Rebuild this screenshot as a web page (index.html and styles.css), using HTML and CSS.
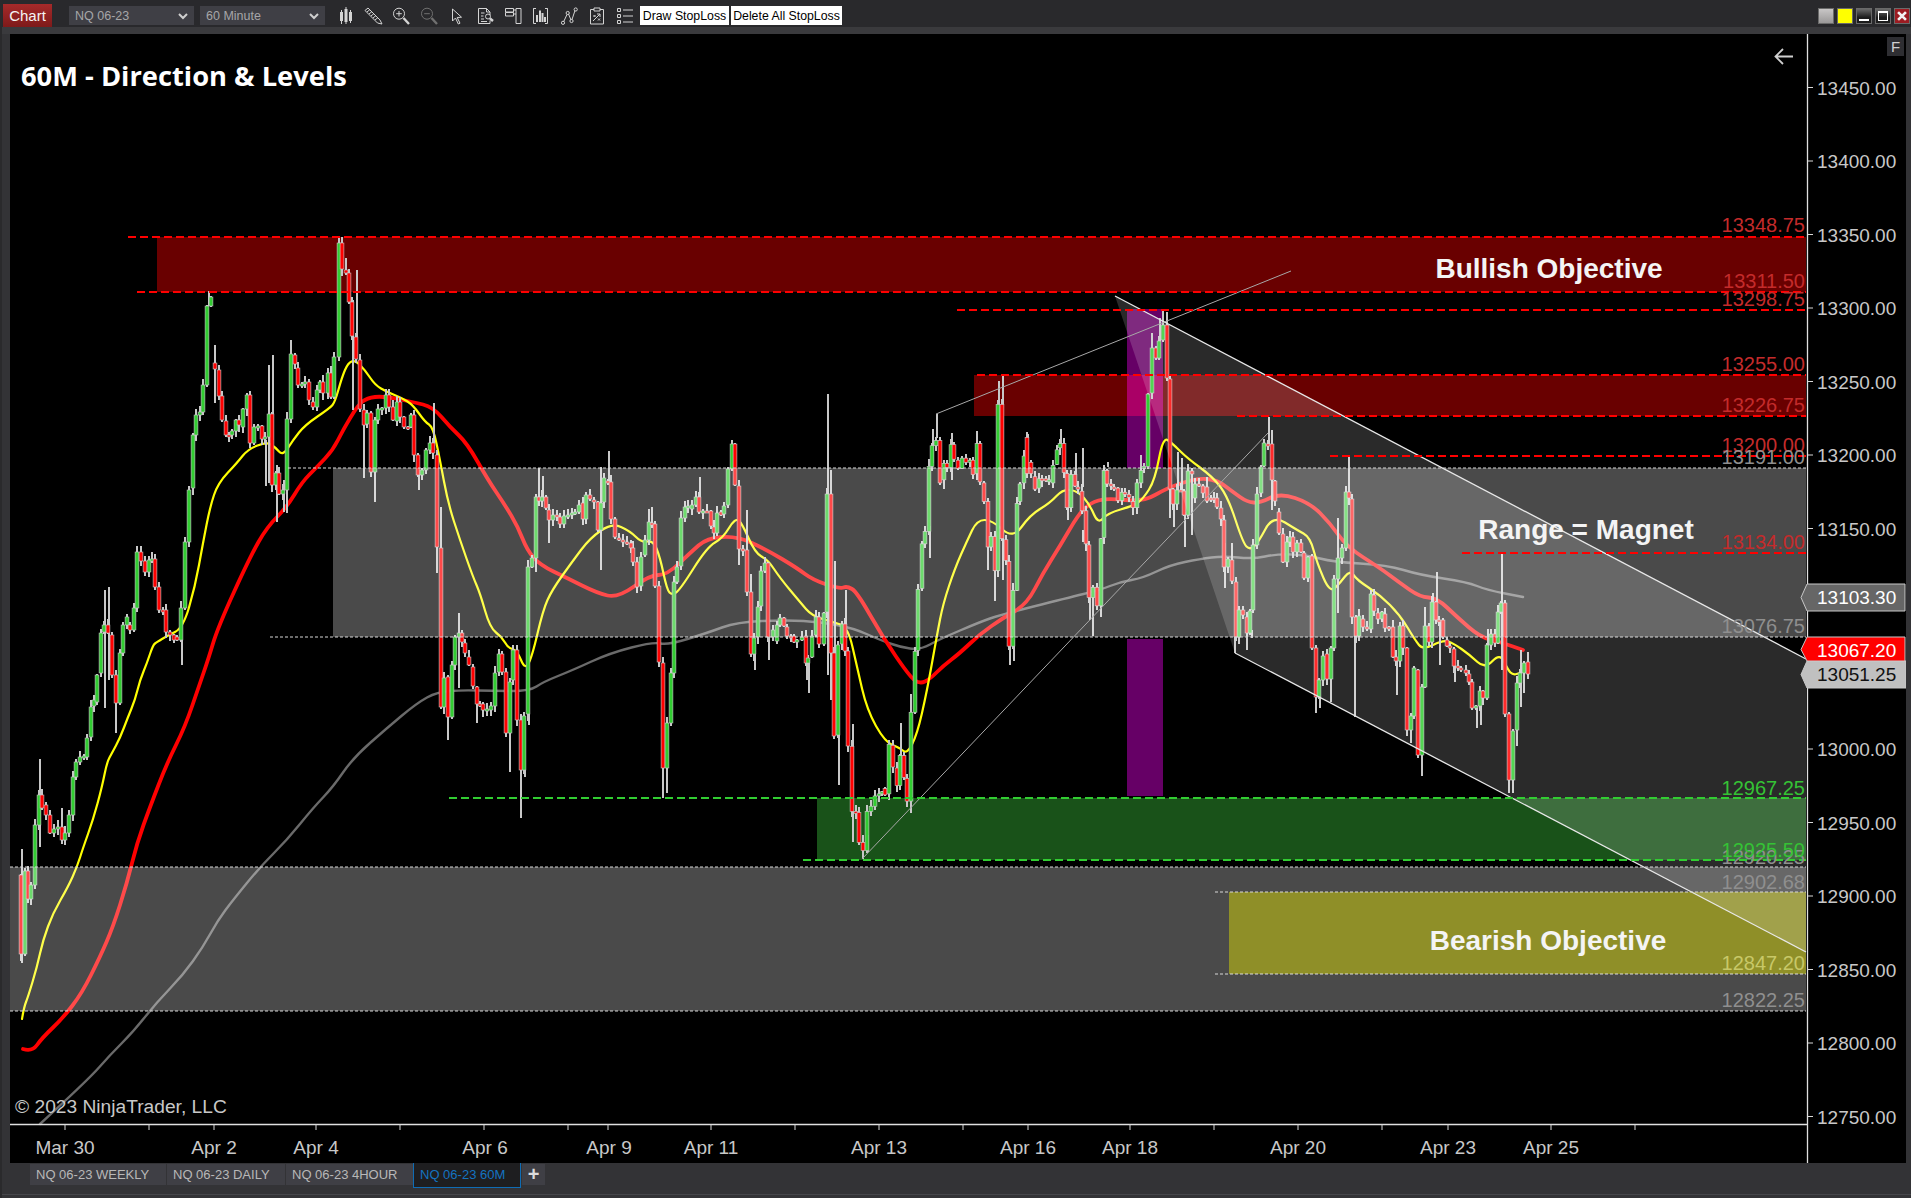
FILE: index.html
```html
<!DOCTYPE html>
<html lang="en">
<head>
<meta charset="utf-8">
<title>Chart</title>
<link rel="stylesheet" href="styles.css">
</head>
<body>
<div class="window">
  <header class="toolbar">
    <div class="chart-tab">Chart</div>
    <div class="combo combo-inst"><span>NQ 06-23</span><svg class="chev" viewBox="0 0 10 7"><path d="M1 1l4 4 4-4"/></svg></div>
    <div class="combo combo-period"><span>60 Minute</span><svg class="chev" viewBox="0 0 10 7"><path d="M1 1l4 4 4-4"/></svg></div>
    <div class="tools">
      <svg class="tool" viewBox="0 0 28 22"><path d="M10.500 6v14M15 3v17M19.500 6v13"/><rect class="solid" x="9" y="8" width="3" height="9"/><rect class="solid" x="13.500" y="5" width="3" height="13"/><rect class="solid" x="18" y="8" width="3" height="9"/></svg>
      <svg class="tool" viewBox="0 0 28 22"><path d="M6 6.500L9 4l12 12 2 4-4.500-1zM8 8l3-2.500M10 10l3-2.500M12 12l3-2.500M14 14l3-2.500M16 16l3-2.500"/></svg>
      <svg class="tool" viewBox="0 0 28 22"><circle cx="12" cy="9.700" r="5.500"/><path d="M12 7v5.500M9.200 9.700h5.600"/><path class="thick" d="M16.500 14l5.500 6"/></svg>
      <svg class="tool dim" viewBox="0 0 28 22"><circle cx="12" cy="9.700" r="5.500"/><path d="M9.200 9.700h5.600"/><path class="thick" d="M16.500 14l5.500 6"/></svg>
      <svg class="tool" viewBox="0 0 28 22"><path d="M9.500 5v12l3-3 2.800 6 1.700-.8-2.800-5.700 4.300-.3z"/></svg>
      <svg class="tool" viewBox="0 0 28 22"><path d="M7.500 4.500h8l3.500 3.500v3M15.500 4.500V8H19M19 16.500v3H7.500v-15M10 9h3.500M10 12h2.500M10 15h3M10 17.500h6"/><circle cx="17" cy="12.500" r="2.500"/><path class="thick" d="M19 14.500l3 2.500"/></svg>
      <svg class="tool" viewBox="0 0 28 22"><path d="M6.500 4.500h8v3.500h-8zM6.500 8.500h8v3.500h-8zM17 4.500h5v15h-5zM14.500 6h2.500M14.500 10h2.500"/></svg>
      <svg class="tool" viewBox="0 0 28 22"><path d="M9 4.500H6.500v15H9M18 4.500h2.500v15H18M6.500 4.500v2M20.500 4.500v2"/><path class="mid" d="M10 18v-7M13 18V6.500M15.500 18V9M18 18v-5"/></svg>
      <svg class="tool" viewBox="0 0 28 22"><path d="M8.500 18l3.500-7.500M13.500 10l2.500 6M17 15.500l3-9"/><circle cx="8" cy="18.800" r="1.600"/><circle cx="12.700" cy="9" r="1.600"/><circle cx="16.500" cy="17" r="1.600"/><circle cx="20.700" cy="5.500" r="1.600"/></svg>
      <svg class="tool" viewBox="0 0 28 22"><path d="M7.500 5.500H11M17 5.500h3.500v14.500h-13V5.500M11 4h6v3h-6zM10 17l7-7M14 10h3v3M10.500 11l2 2M12.500 11l-2 2M15 14.500l2 2M17 14.500l-2 2"/></svg>
      <svg class="tool" viewBox="0 0 28 22"><path d="M6.500 4.500h3v3h-3zM6.500 10.500h3v3h-3zM6.500 16.500h3v3h-3zM12 6h10M12 12h10M12 18h10"/></svg>
    </div>
    <button class="action">Draw StopLoss</button>
    <button class="action">Delete All StopLoss</button>
    <div class="win-buttons">
      <span class="wbtn wbtn-grey"></span>
      <span class="wbtn wbtn-yellow"></span>
      <span class="wbtn wbtn-dark"><i class="min-glyph"></i></span>
      <span class="wbtn wbtn-dark"><i class="max-glyph"></i></span>
      <span class="wbtn wbtn-close"><svg viewBox="0 0 16 16"><path d="M3.500 3.500l9 9M12.500 3.500l-9 9"/></svg></span>
    </div>
  </header>

  <main class="chart-frame">
    <svg id="chart" class="chart" viewBox="10 34 1896 1129" width="1896" height="1129">
      <g id="zones-under">
        <rect class="purple" x="1127" y="309" width="36" height="159"/>
        <rect class="purple" x="1127" y="639" width="36" height="157"/>
        <rect class="zone-red" x="157" y="237" width="1649" height="55"/>
        <rect class="zone-red" x="974" y="375" width="832" height="41"/>
        <rect class="purple-hot" x="1127" y="375" width="36" height="41"/>
        <rect class="zone-green" x="817" y="798" width="989" height="62"/>
      </g>
      <g id="series"></g>
      <g id="zones-over">
        <rect class="zone-grey" x="333" y="468" width="1473" height="169"/>
        <rect class="zone-grey" x="10" y="867" width="1796" height="144"/>
        <rect class="zone-yellow" x="1229" y="892" width="577" height="82"/>
        <polygon class="channel" points="1115,296 1806,659 1806,952 1235,653"/>
      </g>
      <g class="trend">
        <path d="M936 414L1291 271"/>
        <path d="M862 859L1268 433"/>
      </g>
      <g class="channel-lines">
        <path d="M1115 296L1806 659"/>
        <path d="M1235 653L1806 952"/>
      </g>
      <g class="dash dash-red">
        <path d="M128 237H1806M137 292H1806M957 310H1806M977 375H1806M1237 416H1806M1330 456H1806M1462 553H1806"/>
      </g>
      <g class="dash dash-green">
        <path d="M449 798H1806M803 860H1806"/>
      </g>
      <g class="dash dash-white">
        <path d="M288 468H1806M270 637H1806M10 867H1806M1215 892H1806M1215 974H1806M10 1011H1806"/>
      </g>
      <g class="level level-red">
        <text x="1805" y="232">13348.75</text>
        <text x="1805" y="288">13311.50</text>
        <text x="1805" y="306">13298.75</text>
        <text x="1805" y="371">13255.00</text>
        <text x="1805" y="412">13226.75</text>
        <text x="1805" y="452">13200.00</text>
        <text x="1805" y="549">13134.00</text>
      </g>
      <g class="level level-grey">
        <text x="1805" y="464">13191.00</text>
        <text x="1805" y="633">13076.75</text>
        <text x="1805" y="864">12920.25</text>
        <text x="1805" y="889">12902.68</text>
        <text x="1805" y="1007">12822.25</text>
      </g>
      <g class="level level-green">
        <text x="1805" y="795">12967.25</text>
        <text x="1805" y="857">12925.50</text>
      </g>
      <g class="level level-yellow">
        <text x="1805" y="970">12847.20</text>
      </g>
      <text class="big" x="1549" y="278">Bullish Objective</text>
      <text class="big" x="1586" y="539">Range = Magnet</text>
      <text class="big" x="1548" y="950">Bearish Objective</text>
      <text class="title" x="21" y="86">60M - Direction &amp; Levels</text>
      <text class="copy" x="15" y="1113">© 2023 NinjaTrader, LLC</text>
      <path class="back" d="M1793 56.500h-17M1783 49l-7.500 7.500 7.500 7.500"/>

      <path class="axis" d="M1807.500 34V1163M10 1124.500H1807"/>
      <g id="price-axis" class="price-axis"></g>
      <g id="time-axis" class="time-axis"></g>

      <g class="tag tag-grey">
        <polygon points="1801,597.500 1807,584 1905,584 1905,611 1807,611"/>
        <text x="1817" y="604">13103.30</text>
      </g>
      <g class="tag tag-light">
        <polygon points="1801,674.500 1807,661 1906,661 1906,688 1807,688"/>
        <text x="1817" y="681">13051.25</text>
      </g>
      <g class="tag tag-red">
        <polygon points="1801,649.500 1807,637 1905,637 1905,661 1807,661"/>
        <text x="1817" y="657">13067.20</text>
      </g>
    </svg>
    <div class="f-box">F</div>
  </main>

  <nav class="tabs">
    <div class="tab tab-weekly">NQ 06-23 WEEKLY</div>
    <div class="tab tab-daily">NQ 06-23 DAILY</div>
    <div class="tab tab-four">NQ 06-23 4HOUR</div>
    <div class="tab tab-active">NQ 06-23 60M</div>
    <div class="tab tab-add">+</div>
  </nav>
</div>
<script src="app.js"></script>
</body>
</html>
```
FILE: styles.css
```css
* { box-sizing: border-box; }
html, body { margin: 0; padding: 0; background: #333336; overflow: hidden; }
body { font-family: "Liberation Sans", Arial, sans-serif; }
.window { width: 1911px; height: 1198px; display: flex; flex-direction: column; background: #333336; border-left: 2px solid #2a2a2c; position: relative; }
.window::after { content: ""; position: absolute; left: 0; right: 0; bottom: 3px; height: 1px; background: #46464a; }

.toolbar { height: 34px; flex: none; display: flex; align-items: flex-start; padding: 4px 1px 0 1px; background: linear-gradient(#29292c 0 27px, #3a3a3d 27px); border-top: 0; }
.chart-tab { width: 49px; height: 23px; background: linear-gradient(#a52a2a, #7e1a1a); color: #f4f4f4; font-size: 15px; line-height: 24px; text-align: center; }
.combo { height: 19px; margin-top: 2px; background: #3f3f45; color: #a6a6a8; font-size: 12.500px; display: flex; align-items: center; justify-content: space-between; padding: 1px 6px 0; }
.combo-inst { width: 125px; margin-left: 17px; }
.combo-period { width: 125px; margin-left: 6px; }
.chev { width: 10px; height: 7px; fill: none; stroke: #cfcfcf; stroke-width: 2; }
.tools { display: flex; margin-left: 6px; margin-top: 0; }
.tool { width: 28px; height: 22px; fill: none; stroke: #d4d4d4; stroke-width: 1; }
.tool .solid { fill: #d4d4d4; stroke: none; }
.tool .thick { stroke-width: 2.400; }
.tool .mid { stroke-width: 2; }
.tool.dim { stroke: #707070; }
.action { height: 19px; margin: 2px 2px 0 0; padding: 1px 0 0; border: 0; background: #fff; color: #000; font: 12.300px/18px "Liberation Sans", Arial, sans-serif; }
.action:nth-of-type(1) { width: 89px; margin-left: 1px; }
.action:nth-of-type(2) { width: 111px; }
.win-buttons { margin-left: auto; margin-top: 4px; display: flex; gap: 3px; }
.wbtn { width: 16px; height: 16px; display: flex; align-items: center; justify-content: center; border: 1px solid #6a6a6a; }
.wbtn-grey { background: linear-gradient(#c8c6c6, #9a9898); }
.wbtn-yellow { background: #ffff00; }
.wbtn-dark { background: linear-gradient(#6a6a6a, #1c1c1c 60%); }
.wbtn-close { background: #9c1c22; }
.wbtn-close svg { width: 14px; height: 14px; fill: none; stroke: #f2f2f2; stroke-width: 3; }
.min-glyph { width: 10px; height: 2px; background: #fff; margin-top: 7px; }
.max-glyph { width: 10px; height: 10px; border: 1px solid #fff; border-top-width: 2px; }

.chart-frame { position: relative; height: 1129px; flex: none; margin-left: 8px; width: 1896px; background: #000; }
.chart { display: block; background: #000; font-family: "Liberation Sans", Arial, sans-serif; }
.f-box { position: absolute; left: 1877px; top: 3px; width: 17px; height: 19px; background: #2e2e32; color: #d0d0d0; font-size: 15px; line-height: 19px; text-align: center; }

.purple { fill: #660066; }
.purple-hot { fill: #aa0066; }
.zone-red { fill: rgba(255, 0, 0, 0.41); }
.zone-green { fill: #195219; }
.zone-yellow { fill: #8f8f28; }
.zone-grey { fill: rgba(255, 255, 255, 0.29); }
.channel { fill: rgba(255, 255, 255, 0.165); }
.trend path { stroke: #a8a8a8; stroke-width: 1; fill: none; }
.channel-lines path { stroke: #e8e8e8; stroke-width: 1.300; fill: none; }
.dash path { fill: none; }
.dash-red path { stroke: #ff0000; stroke-width: 2; stroke-dasharray: 8 4; }
.dash-green path { stroke: #32cd32; stroke-width: 2; stroke-dasharray: 8 4; }
.dash-white path { stroke: #d8d8d8; stroke-width: 1; stroke-dasharray: 3 2; }

.level text { font-size: 20px; text-anchor: end; }
.level-red text { fill: #c42b2b; }
.level-grey text { fill: #8f8f8f; }
.level-green text { fill: #35c235; }
.level-yellow text { fill: #c8c868; }
.big { font-size: 28px; font-weight: 700; fill: #f4f4f4; text-anchor: middle; }
.title { font-family: "Open Sans", sans-serif; font-size: 27.300px; font-weight: 700; fill: #fff; }
.copy { font-size: 19.200px; fill: #c8c8c8; }
.back { fill: none; stroke: #cfcfcf; stroke-width: 1.800; }

.axis { stroke: #e0e0e0; stroke-width: 1.300; fill: none; }
.price-axis text { font-size: 19px; fill: #c8c8c8; }
.price-axis path, .time-axis path { stroke: #d8d8d8; stroke-width: 1; fill: none; }
.time-axis text { font-size: 19px; fill: #c8c8c8; text-anchor: middle; }
.tag polygon { stroke: #c8c8c8; stroke-width: 1; }
.tag text { font-size: 19px; }
.tag-grey polygon { fill: #666; }
.tag-grey text { fill: #fff; }
.tag-red polygon { fill: #ff0000; }
.tag-red text { fill: #fff; }
.tag-light polygon { fill: #c0c0c0; }
.tag-light text { fill: #111; }

.ma { fill: none; stroke-linejoin: round; stroke-linecap: round; }
.ma-grey { stroke: #6a6a6a; stroke-width: 2.400; }
.ma-yellow { stroke: #ffff00; stroke-width: 2.200; }
.ma-red { stroke: #ff0000; stroke-width: 3.800; }
.wick { stroke: #c8c8c8; stroke-width: 2; shape-rendering: crispEdges; }
.body { stroke: #c8c8c8; stroke-width: 0.600; }
.body-up { fill: #32cd32; }
.body-down { fill: #ff0000; }

.tabs { flex: 1; display: flex; align-items: flex-start; padding-left: 28px; background: #333336; }
.tab { height: 21px; margin-top: 1px; margin-right: 1px; background: #3f3f45; color: #b8b8b8; font-size: 13px; line-height: 21px; padding-left: 6px; white-space: nowrap; }
.tab-weekly { width: 136px; }
.tab-daily { width: 118px; }
.tab-four { width: 127px; margin-right: 0; }
.tab-active { width: 108px; height: 25px; margin-top: 0; background: #1e1e20; color: #1473c0; line-height: 23px; border: 1px solid #0f6cb4; border-top: 0; }
.tab-add { width: 23px; color: #dcdcdc; font-size: 20px; font-weight: 700; padding: 0; text-align: center; }
```
FILE: app.js
```js
// Price series traced from the chart: x, open y, close y (in screen pixels).
var segA = [21,875,954,25,954,871,28,871,899,31,899,885,35,885,825,39,825,795,42,795,808,46,805,815,50,815,833,54,833,829,58,829,827,62,827,840,65,840,833,69,833,815,73,815,777,76,777,762,80,762,757,84,757,756,87,757,738,91,737,707,94,706,700,97,702,675,101,673,633,104,632,625,108,625,633,112,635,675,116,675,703,120,703,653,123,653,625,127,625,617,130,625,630,134,630,608,137,608,552,141,552,561,145,561,572,149,572,560,152,560,559,155,559,587,159,587,610,163,610,612,166,610,632,170,632,635,174,635,640,177,637,640,181,640,608,185,608,542,189,542,490,193,488,435,196,435,415,200,415,412,203,412,385,207,385,306,211,306,297,215,363,369,219,370,396,222,396,420,226,421,435,229,435,436,232,435,431,236,431,420,239,420,425,243,427,409,247,409,395,250,395,443,254,443,427,258,427,426,262,426,439,265,439,437,269,437,414,272,414,485,276,485,473,279,473,494,283,494,490,287,490,419,291,419,354,295,355,364,298,368,385,302,385,384,305,384,382,309,382,400,313,402,407,317,407,390,320,390,382,323,382,393,328,393,373,331,373,397,334,397,357,339,357,243,342,243,269,346,270,273,349,273,302,352,302,336,356,337,359,360,360,409,364,410,425,367,424,413,371,413,472,375,472,420,378,420,409,382,409,408,386,408,395,389,395,407,393,407,420,397,421,402,400,402,417,404,417,427,408,427,428,411,427,415,414,415,455,418,455,475,422,475,470,426,470,450,430,450,443,433,443,453,437,455,547,441,548,707,444,707,678,448,677,717,452,717,665,455,665,637,459,637,633,462,633,642,465,643,653,469,657,665,473,667,686,477,687,704,480,704,705,483,704,710,487,710,709,491,710,706,495,706,673,499,672,654,502,654,672,506,672,733,510,733,682,513,680,650,517,650,720,521,720,770,524,770,716,528,714,567,532,567,558,536,558,497,539,497,501,542,501,497,546,497,508,549,510,520,553,520,515,557,515,516,560,517,524,564,524,516,568,516,515,572,515,513,575,513,512,579,512,505,583,503,519,586,519,495,590,495,499,594,500,502,598,502,530,601,530,503,604,502,478,608,481,483,611,482,519,615,519,537,619,538,540,623,540,542,627,542,543,631,543,548,633,548,562,637,562,587,641,586,557,645,555,540,649,540,522,652,523,524,655,524,586,659,586,662,663,663,768,667,768,723,671,723,673,674,673,582,677,582,567,681,566,518,685,518,507,688,507,506,692,509,505,696,505,497,699,497,512,703,512,511,707,511,512,711,511,526,714,527,533,717,533,513,721,512,515,724,514,506,728,505,469,732,469,444,735,444,485,739,486,549,743,549,550,747,550,592,751,592,654,754,654,638,758,637,607,761,606,571,765,571,563,768,563,637,773,637,630,777,641,625,780,625,618,784,618,626,787,627,636,791,636,637,794,636,642,797,642,640,802,640,637,806,636,663,808,663,658,812,657,636,816,635,617,819,617,644,824,644,613,827,612,494,831,494,653,834,653,736,838,735,645,842,644,624,845,624,651,848,651,746];
var segB = [852,734,797,856,797,798,859,798,827,863,827,835,867,835,797,871,797,792,875,792,782,879,782,780,882,780,778,885,775,781,889,780,732,893,733,754,897,755,772,900,772,743,904,743,764,907,765,787,911,787,701,915,701,642,918,641,582,922,581,538,925,538,526,929,526,463,932,463,443,936,443,438,940,438,479,944,476,460,947,460,464,951,464,442,954,442,456,958,457,465,962,465,455,966,455,459,970,459,457,973,457,471,977,470,441,980,441,478,984,479,497,988,497,541,991,541,531,995,531,564,998,564,403,1002,403,533,1006,534,554,1009,555,637,1013,637,583,1017,583,499,1020,497,480,1024,479,453,1027,435,470,1031,459,470,1035,473,485,1039,484,475,1042,475,476,1046,475,477,1049,477,476,1053,479,462,1057,461,447,1060,445,441,1064,441,469,1067,470,503,1071,503,471,1075,471,482,1078,483,485,1082,487,506,1086,506,538,1089,539,590,1093,590,580,1097,580,598,1101,598,533,1104,532,467,1107,467,480,1111,480,482,1114,483,484,1118,484,496,1122,496,488,1125,488,489,1129,490,493,1133,497,503,1137,503,479,1141,479,467,1144,465,463,1148,463,393];
var segC = [1152,393,348,1156,348,358,1159,358,341,1163,340,325,1167,325,378,1170,379,489,1173,489,504,1177,504,490,1181,490,491,1184,491,515,1188,515,471,1192,471,474,1195,498,484,1199,484,486,1203,486,493,1207,487,501,1211,498,499,1214,498,498,1217,498,507,1221,508,519,1224,520,567,1228,567,559,1232,560,581,1236,582,637,1239,637,610,1243,610,615,1247,617,633,1250,633,611,1253,610,545,1257,545,494,1261,493,467,1264,466,443,1268,444,444,1272,444,480,1275,481,501,1279,512,533,1283,534,562,1287,562,542,1290,542,537,1293,537,552,1297,552,543,1301,543,552,1304,553,578,1308,578,557,1312,556,648,1316,648,697,1319,697,680,1323,680,656,1327,654,679,1331,679,648,1334,648,579,1338,579,558,1342,558,548,1346,548,492,1349,492,498,1352,499,617,1356,617,636,1359,636,616,1363,619,627,1367,627,629,1371,629,594,1374,595,611,1378,613,619,1382,619,612,1385,614,628,1389,627,627,1393,627,657,1396,657,661,1400,661,626,1403,626,648,1407,648,730,1411,730,716,1414,716,668,1418,670,755,1422,755,687,1425,687,626,1429,626,642,1432,642,602,1436,602,620,1439,620,621,1443,620,637,1447,640,646,1450,646,648,1454,649,666,1458,666,667,1461,668,668,1466,670,673,1469,674,682,1472,682,708,1476,708,706,1480,706,691,1483,691,698,1487,698,645,1491,645,634,1495,634,643,1498,643,612,1501,612,603,1505,603,714,1509,714,780,1513,780,731,1517,730,683,1520,683,673,1524,673,663,1528,662,674];
// Long wicks: x, top, bottom.
var wicks = [22,849,963,40,759,847,62,808,843,105,590,708,109,587,680,116,700,733,182,640,665,209,291,306,215,345,403,269,365,483,273,355,440,266,440,486,277,465,522,284,480,512,287,490,513,291,340,354,339,237,243,346,258,270,353,300,410,357,270,340,364,420,478,375,470,502,419,470,490,434,403,450,441,507,707,437,450,573,448,677,740,459,613,688,477,700,723,510,730,772,521,720,818,525,770,777,529,714,725,539,468,497,543,476,500,536,555,572,549,515,543,601,467,570,609,451,482,649,509,522,652,507,524,663,660,798,667,768,793,700,477,497,739,480,565,747,510,550,751,574,592,755,650,670,769,630,660,807,660,680,809,660,693,828,394,675,831,470,700,835,561,653,839,735,785,846,590,624,853,724,842,863,835,859,868,835,852,901,723,772,911,694,813,930,526,558,937,414,438,933,429,463,944,460,489,952,433,480,977,431,470,988,520,570,995,560,601,999,381,420,1003,375,580,1010,640,665,1014,640,661,1028,434,470,1061,429,447,1068,500,520,1076,453,482,1083,448,487,1083,530,542,1093,590,636,1090,590,620,1101,600,617,1108,462,467,1133,500,513,1141,455,467,1152,333,348,1160,318,341,1163,310,325,1167,312,325,1170,489,518,1174,500,527,1178,452,504,1182,458,491,1185,512,547,1192,474,535,1207,477,487,1225,543,588,1232,543,581,1235,637,653,1247,633,650,1252,630,638,1269,417,444,1272,430,510,1316,697,713,1320,697,708,1331,679,702,1338,518,613,1349,457,492,1355,617,717,1397,661,695,1411,730,743,1422,755,776,1425,607,687,1437,572,602,1433,593,642,1440,620,665,1455,649,682,1477,708,728,1481,706,725,1488,629,698,1502,554,670,1509,780,793,1513,780,793,1517,730,746,1521,650,707,1524,673,693,1528,652,662];
var yellow = [22,1019,24,1007,28,997,37,967,43,940,53,913,68,887,77,867,83,848,93,820,102,787,107,762,112,753,120,738,128,717,135,700,140,680,147,663,153,645,157,642,167,636,183,628,195,587,203,543,210,507,218,483,237,463,248,449,267,442,275,447,283,456,293,440,305,425,330,408,335,402,342,377,348,363,355,360,365,370,375,385,387,392,402,398,413,405,425,422,433,427,440,460,448,503,460,540,473,577,480,593,490,628,502,637,508,648,517,650,525,670,532,657,543,610,552,590,572,562,590,538,612,523,630,531,642,543,653,540,660,557,667,590,672,595,680,590,707,547,723,538,735,518,742,523,755,553,768,560,780,578,800,602,812,616,833,622,848,627,857,667,867,710,885,742,900,748,907,754,917,735,927,691,937,635,943,604,955,568,967,541,977,520,992,520,1013,539,1030,515,1050,503,1063,489,1078,491,1090,505,1098,524,1108,513,1133,506,1143,499,1155,480,1163,437,1172,443,1187,458,1213,477,1228,497,1243,543,1250,550,1258,543,1273,515,1297,530,1310,537,1317,563,1330,593,1340,583,1350,570,1357,580,1380,595,1400,615,1415,640,1423,650,1443,640,1453,643,1470,655,1485,669,1500,653,1508,670,1513,675,1520,673];
var red = [23,1049,32,1052,42,1038,63,1018,82,993,100,957,113,927,127,883,137,843,150,807,167,763,185,727,200,683,208,660,218,627,250,557,267,527,287,507,302,482,317,467,333,450,343,430,358,405,367,398,383,396,413,402,433,407,450,427,467,443,488,480,505,505,518,527,527,550,540,565,567,578,597,593,618,598,650,575,667,575,690,553,707,538,737,536,767,550,797,568,813,580,840,589,847,586,857,592,882,636,910,677,920,684,930,679,943,666,960,653,980,634,1003,618,1027,604,1043,573,1060,546,1078,515,1090,503,1107,498,1143,502,1167,488,1197,478,1217,480,1233,492,1247,502,1260,503,1280,493,1310,503,1330,523,1347,547,1380,568,1400,583,1420,597,1437,598,1457,617,1480,637,1500,642,1523,650];
var grey = [40,1124,88,1080,110,1055,133,1032,157,1002,183,975,203,947,218,920,233,900,260,867,287,840,313,808,333,787,353,758,387,728,417,703,437,692,463,690,493,691,530,691,543,682,573,670,610,653,653,642,668,645,707,633,737,622,787,620,820,622,853,628,880,640,900,647,920,650,940,639,980,622,1000,615,1067,598,1100,590,1120,582,1143,578,1170,565,1200,559,1223,556,1253,559,1277,554,1307,555,1333,562,1387,565,1420,575,1467,582,1487,590,1523,597];

var NS = "http://www.w3.org/2000/svg";
function el(parent, tag, attrs, text) {
  var n = document.createElementNS(NS, tag);
  for (var k in attrs) n.setAttribute(k, attrs[k]);
  if (text) n.textContent = text;
  parent.appendChild(n);
  return n;
}
// Smooth line through the midpoints of the traced points.
function smooth(a) {
  var d = "M" + a[0] + " " + a[1];
  for (var i = 2; i + 3 < a.length; i += 2) {
    var mx = (a[i] + a[i + 2]) / 2, my = (a[i + 1] + a[i + 3]) / 2;
    d += "Q" + a[i] + " " + a[i + 1] + " " + mx + " " + my;
  }
  return d + "L" + a[a.length - 2] + " " + a[a.length - 1];
}

// The middle section was measured on a crop with a slightly different vertical scale.
function rescale(y) { return 360 + (y - 360) * 1.033; }
var bars = [];
function add(seg, fix) {
  for (var i = 0; i < seg.length; i += 3) {
    bars.push({ x: seg[i], o: fix ? rescale(seg[i + 1]) : seg[i + 1], c: fix ? rescale(seg[i + 2]) : seg[i + 2] });
  }
}
add(segA, false); add(segB, true); add(segC, false);

var series = document.getElementById("series");
el(series, "path", { "class": "ma ma-grey", d: smooth(grey) });
el(series, "path", { "class": "ma ma-red", d: smooth(red) });
el(series, "path", { "class": "ma ma-yellow", d: smooth(yellow) });

var seed = 7;
function rnd() { seed = (seed * 16807) % 2147483647; return seed / 2147483647; }
var i;
for (i = 0; i < wicks.length; i += 3) {
  el(series, "line", { "class": "wick", x1: wicks[i], x2: wicks[i], y1: wicks[i + 1], y2: wicks[i + 2] });
}
// Wicks first, bodies on top of every wick.
bars.forEach(function (b) {
  var top = Math.min(b.o, b.c), bot = Math.max(b.o, b.c);
  var up = Math.round(1 + rnd() * 6), dn = Math.round(1 + rnd() * 6);
  el(series, "line", { "class": "wick", x1: b.x, x2: b.x, y1: top - up, y2: bot + dn });
});
bars.forEach(function (b) {
  var top = Math.min(b.o, b.c), bot = Math.max(b.o, b.c);
  el(series, "rect", {
    "class": "body " + (b.c < b.o ? "body-up" : "body-down"),
    x: b.x - 1.9, y: top, width: 3.8, height: Math.max(bot - top, 2)
  });
});

var pa = document.getElementById("price-axis");
for (var p = 13450; p >= 12750; p -= 50) {
  var y = 896 + (12900 - p) * 1.47;
  el(pa, "path", { d: "M1808 " + y + "H1813" });
  el(pa, "text", { x: 1817, y: y + 7 }, p.toFixed(2));
}
var ta = document.getElementById("time-axis");
[65,149,214,316,400,484,568,608,711,795,879,963,1028,1130,1214,1298,1382,1448,1551,1635].forEach(function (x) {
  el(ta, "path", { d: "M" + x + " 1124V1130" });
});
[["Mar 30",65],["Apr 2",214],["Apr 4",316],["Apr 6",485],["Apr 9",609],["Apr 11",711],["Apr 13",879],["Apr 16",1028],["Apr 18",1130],["Apr 20",1298],["Apr 23",1448],["Apr 25",1551]].forEach(function (l) {
  el(ta, "text", { x: l[1], y: 1154 }, l[0]);
});
```
